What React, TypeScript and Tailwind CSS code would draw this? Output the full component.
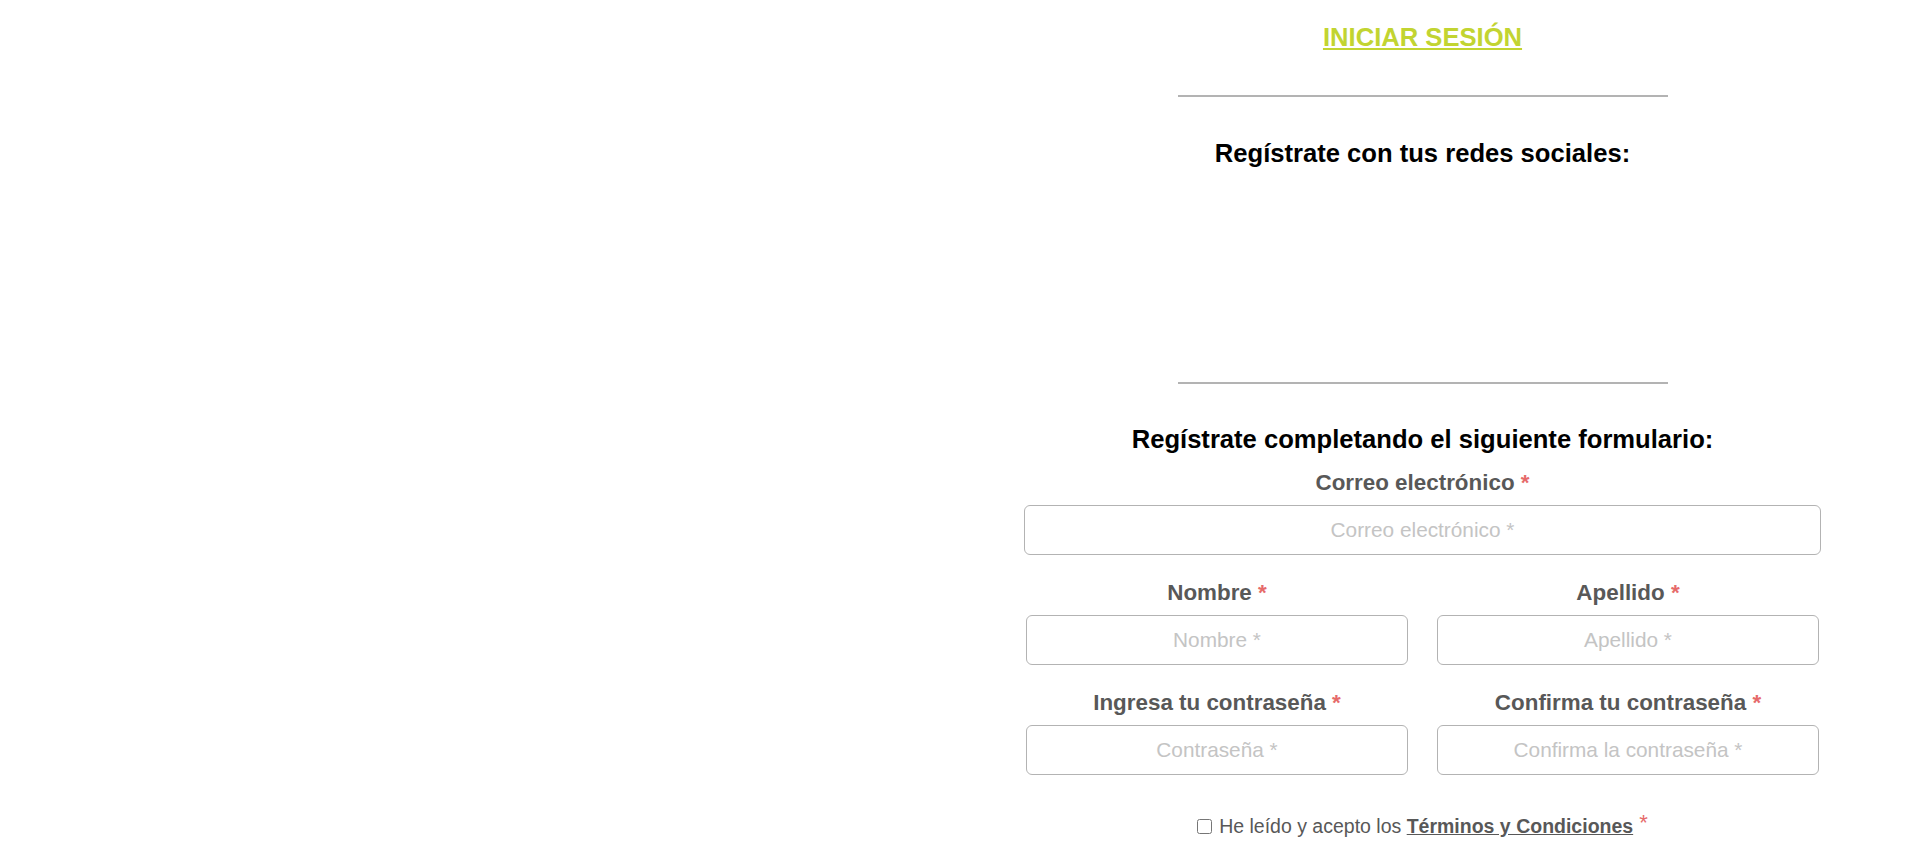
export default function App() {
  const Req = () => <span className="text-[#e66a6a]"> *</span>;

  return (
    <div className="flex min-h-screen bg-white font-['Liberation_Sans',Arial,sans-serif]">
      {/* Left side (image area, empty) */}
      <div className="flex-1"></div>

      {/* Right side: register form */}
      <div className="w-[896px] pr-[99px] pb-[338px]">
        <div className="w-[797px] flex flex-col items-center">
          <a href="#" className="mt-[22px] text-[25.6px] leading-[30px] font-bold text-[#c2d431] underline">
            INICIAR SESIÓN
          </a>

          <div className="mt-[43px] w-[490px] h-[2px] bg-[#b3b3b3]"></div>

          <h2 className="mt-[41px] text-[25.6px] leading-[30px] font-bold text-black">
            Regístrate con tus redes sociales:
          </h2>

          {/* social buttons area */}
          <div className="h-[214px]"></div>

          <div className="w-[490px] h-[2px] bg-[#b3b3b3]"></div>

          <h2 className="mt-[40px] text-[25.6px] leading-[30px] font-bold text-black">
            Regístrate completando el siguiente formulario:
          </h2>

          <form className="w-full mt-[15px]">
            <div className="flex flex-col items-center">
              <label className="text-[22.4px] leading-[28px] font-bold text-[#585858] mb-2">
                Correo electrónico<Req />
              </label>
              <input
                type="email"
                placeholder="Correo electrónico *"
                className="w-full h-[50px] border border-[#b3b3b3] rounded-[6px] text-center text-[20.8px] placeholder:text-[#c4c4c4] outline-none"
              />
            </div>

            <div className="flex gap-[29px] px-[2px] mt-[24px]">
              <div className="flex-1 flex flex-col items-center">
                <label className="text-[22.4px] leading-[28px] font-bold text-[#585858] mb-2">
                  Nombre<Req />
                </label>
                <input
                  type="text"
                  placeholder="Nombre *"
                  className="w-full h-[50px] border border-[#b3b3b3] rounded-[6px] text-center text-[20.8px] placeholder:text-[#c4c4c4] outline-none"
                />
              </div>
              <div className="flex-1 flex flex-col items-center">
                <label className="text-[22.4px] leading-[28px] font-bold text-[#585858] mb-2">
                  Apellido<Req />
                </label>
                <input
                  type="text"
                  placeholder="Apellido *"
                  className="w-full h-[50px] border border-[#b3b3b3] rounded-[6px] text-center text-[20.8px] placeholder:text-[#c4c4c4] outline-none"
                />
              </div>
            </div>

            <div className="flex gap-[29px] px-[2px] mt-[24px]">
              <div className="flex-1 flex flex-col items-center">
                <label className="text-[22.4px] leading-[28px] font-bold text-[#585858] mb-2">
                  Ingresa tu contraseña<Req />
                </label>
                <input
                  type="password"
                  placeholder="Contraseña *"
                  className="w-full h-[50px] border border-[#b3b3b3] rounded-[6px] text-center text-[20.8px] placeholder:text-[#c4c4c4] outline-none"
                />
              </div>
              <div className="flex-1 flex flex-col items-center">
                <label className="text-[22.4px] leading-[28px] font-bold text-[#585858] mb-2">
                  Confirma tu contraseña<Req />
                </label>
                <input
                  type="password"
                  placeholder="Confirma la contraseña *"
                  className="w-full h-[50px] border border-[#b3b3b3] rounded-[6px] text-center text-[20.8px] placeholder:text-[#c4c4c4] outline-none"
                />
              </div>
            </div>

            {/* Terms */}
            <div className="mt-[39px] flex items-center justify-center text-[19.5px] leading-[24px] text-[#585858]">
              <input type="checkbox" className="w-[15px] h-[15px] mr-[7px]" />
              <span>
                He leído y acepto los{" "}
                <a href="#" className="font-bold underline text-[#585858]">Términos y Condiciones</a>
                <span className="text-[22px] text-[#e66a6a] relative -top-[3px]"> *</span>
              </span>
            </div>
          </form>
        </div>
      </div>
    </div>
  );
}
